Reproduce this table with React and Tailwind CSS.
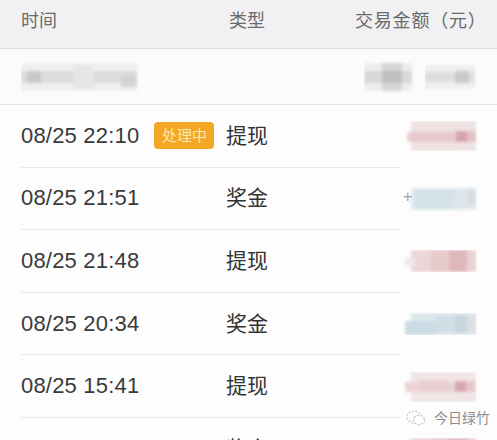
import React from "react";

const FONT = { fontFamily: '"Liberation Sans", Arial, "Noto Sans CJK SC", sans-serif' };

function Mosaic({ w, h, rects, blur = 1.6 }) {
  const id = "b" + Math.random().toString(36).slice(2, 8);
  return (
    <svg width={w} height={h} viewBox={`0 0 ${w} ${h}`} className="block shrink-0">
      <defs>
        <filter id={id} x="-20%" y="-40%" width="140%" height="180%">
          <feGaussianBlur stdDeviation={blur} />
        </filter>
      </defs>
      <g filter={`url(#${id})`}>
        {rects.map((r, i) => (
          <rect key={i} x={r[0]} y={r[1]} width={r[2]} height={r[3]} fill={r[4]} />
        ))}
      </g>
    </svg>
  );
}

const pinkA = [
  [8, 0, 65, 30, "#efe2e3"],
  [4, 11, 69, 10, "#e9d0d2"],
  [8, 11, 45, 10, "#e7c9cc"],
  [53, 10, 11, 11, "#d7a4ab"],
  [64, 10, 9, 11, "#e4c2c6"],
];
const blueA = [
  [8, 2, 65, 22, "#e2eaee"],
  [12, 4, 38, 18, "#d3e1e8"],
  [50, 4, 12, 18, "#dbe5ea"],
  [64, 4, 9, 16, "#d6dee4"],
];
const pinkB = [
  [8, 0, 65, 22, "#ecd6d8"],
  [2, 8, 10, 8, "#eee6e7"],
  [28, 0, 18, 22, "#e7caca"],
  [46, 0, 18, 22, "#dfb8bc"],
  [64, 0, 9, 22, "#ead2d4"],
];
const blueB = [
  [8, 0, 65, 22, "#dde7ec"],
  [2, 8, 30, 14, "#cadce3"],
  [32, 2, 20, 18, "#d0dfe6"],
  [52, 2, 12, 18, "#c9d6de"],
  [64, 2, 9, 18, "#d8e0e6"],
];
const pinkC = [
  [8, 0, 65, 30, "#f1e5e6"],
  [2, 10, 71, 10, "#ead3d5"],
  [16, 8, 30, 12, "#e9cfd2"],
  [52, 9, 11, 11, "#d6a6ad"],
  [63, 9, 8, 11, "#e6c7cb"],
];

function AmountBlock({ rects, h, plus }) {
  return (
    <div className="relative">
      <Mosaic w={74} h={h} rects={rects} />
      {plus && (
        <span className="absolute left-[0px] top-[1px] text-[16px] leading-[20px] text-[#9aa3a8]" style={FONT}>
          +
        </span>
      )}
    </div>
  );
}

const rows = [
  { time: "08/25 22:10", type: "提现", badge: true, amount: pinkA, ah: 30 },
  { time: "08/25 21:51", type: "奖金", amount: blueA, ah: 26, plus: true },
  { time: "08/25 21:48", type: "提现", amount: pinkB, ah: 22 },
  { time: "08/25 20:34", type: "奖金", amount: blueB, ah: 22 },
  { time: "08/25 15:41", type: "提现", amount: pinkC, ah: 30 },
  { time: "08/25 14:02", type: "奖金", amount: pinkB, ah: 22, faded: true },
];

export default function App() {
  return (
    <div className="relative w-[497px] h-[440px] overflow-hidden bg-[#fdfdfe]" style={FONT}>
      {/* header */}
      <div className="flex h-[49px] items-start border-b border-[#dcdcde] bg-[#f1f1f3] pt-[9px] text-[18px] leading-[24px] text-[#6a6a6a]">
        <div className="w-[229px] pl-[21px]">时间</div>
        <div className="w-[126px]">类型</div>
        <div className="whitespace-nowrap tracking-[0.8px]">交易金额（元）</div>
      </div>

      {/* blurred summary row */}
      <div className="flex h-[56px] items-center border-b border-[#e4e4e6] bg-[#fbfbfc]">
        <div className="pl-[21px]">
          <Mosaic
            w={118}
            h={32}
            rects={[
              [0, 2, 116, 28, "#efeff1"],
              [0, 10, 116, 12, "#dcdcde"],
              [6, 10, 14, 12, "#c8c8ca"],
              [52, 4, 20, 24, "#e6e6e8"],
              [100, 14, 16, 12, "#d4d4d6"],
            ]}
          />
        </div>
        <div className="ml-auto flex items-center gap-[11px] pr-[20px]">
          <Mosaic
            w={50}
            h={32}
            rects={[
              [0, 2, 48, 28, "#ededef"],
              [0, 10, 48, 12, "#d8d8da"],
              [18, 2, 20, 28, "#d6d6d8"],
              [18, 10, 20, 12, "#c0c0c2"],
            ]}
          />
          <Mosaic
            w={52}
            h={28}
            rects={[
              [0, 2, 50, 24, "#efeff1"],
              [0, 9, 50, 10, "#dedee0"],
              [30, 8, 14, 12, "#c9c9cb"],
            ]}
          />
        </div>
      </div>

      {/* data rows */}
      {rows.map((r, i) => (
        <div key={i} className="flex h-[62.6px]">
          <div className="ml-[21px] flex w-[379px] items-center border-b border-[#e9e9eb]">
            <div className={"flex w-[205px] items-center " + (r.faded ? "opacity-30" : "")}>
              <span className="text-[22px] leading-[26px] tracking-[0.2px] text-[#3a3a3a]">{r.time}</span>
              {r.badge && (
                <span className="ml-[15px] flex h-[27px] w-[60px] items-center justify-center rounded-[4px] bg-[#f4a724] text-[15px] leading-[20px] text-[#fde7b0]">
                  处理中
                </span>
              )}
            </div>
            <span className="text-[21px] leading-[26px] text-[#333]">{r.type}</span>
          </div>
          <div className="flex flex-1 items-center justify-end pr-[20px]">
            <AmountBlock rects={r.amount} h={r.ah} plus={r.plus} />
          </div>
        </div>
      ))}

      {/* watermark */}
      <div className="absolute left-[406px] top-[408px] flex items-center gap-[8px] text-[14px] leading-[20px] text-[#8e8e8e]" style={FONT}>
        <svg width="20" height="18" viewBox="0 0 20 18">
          <ellipse cx="8" cy="8" rx="7" ry="6" fill="none" stroke="#c9c9c9" strokeWidth="1.2" strokeDasharray="2 1.5" />
          <ellipse cx="13" cy="11" rx="5.5" ry="4.6" fill="#fff" stroke="#c0c0c0" strokeWidth="1.2" strokeDasharray="2 1.5" />
        </svg>
        <span>今日绿竹</span>
      </div>
    </div>
  );
}
